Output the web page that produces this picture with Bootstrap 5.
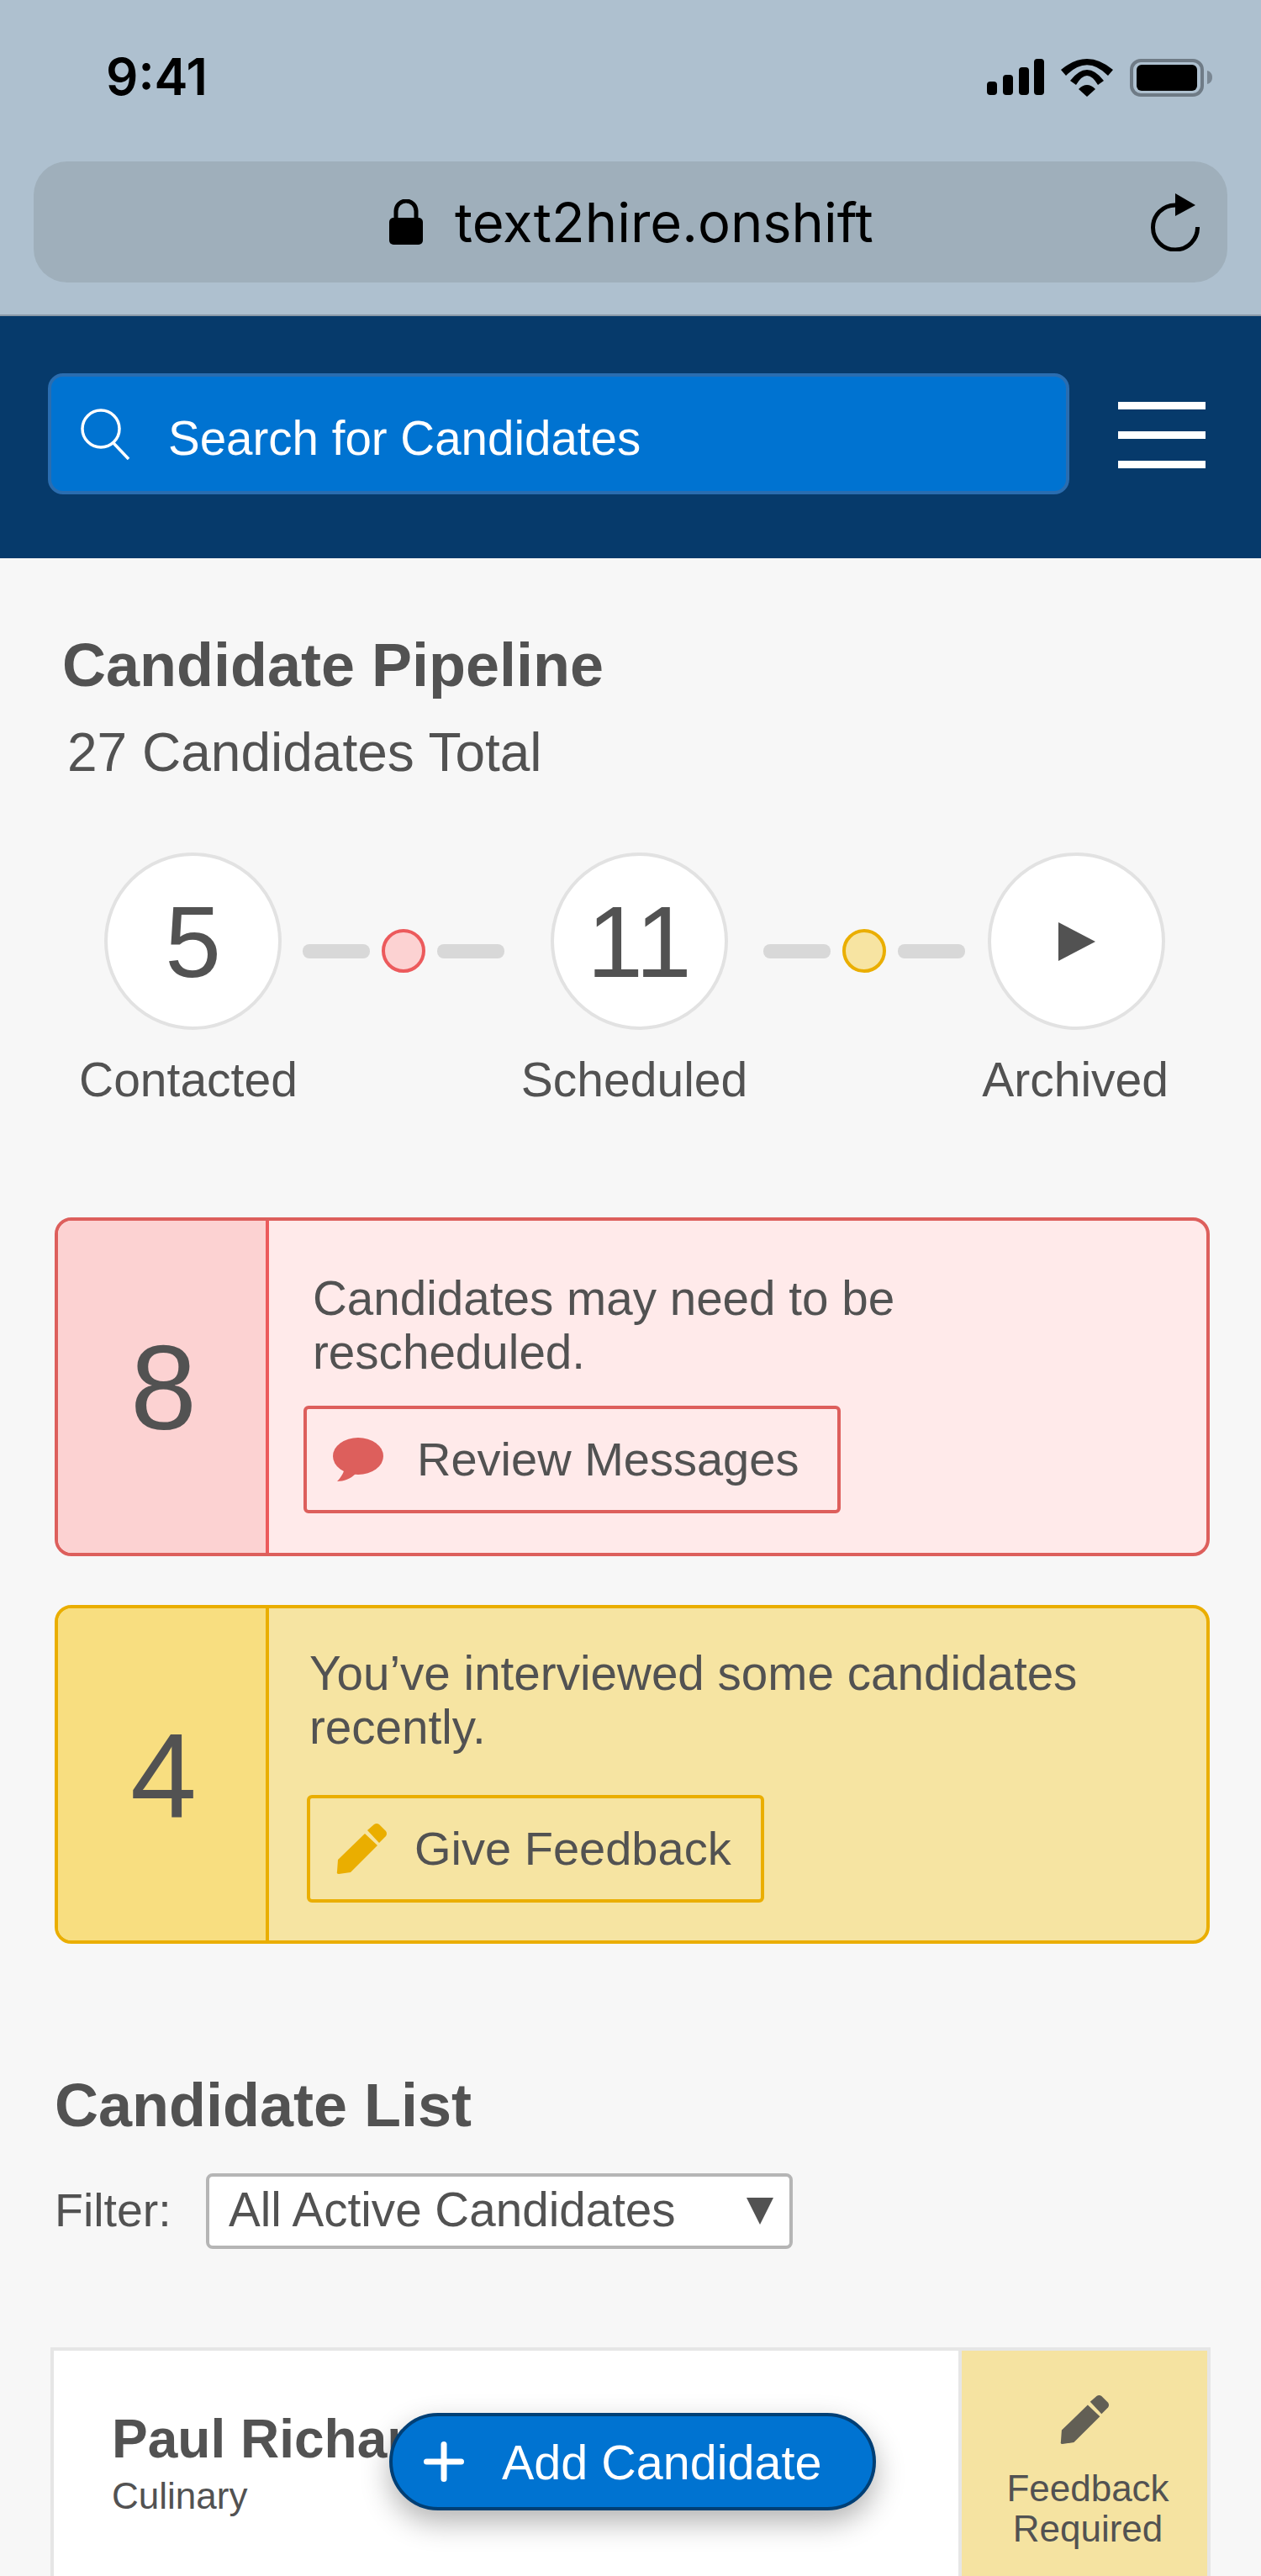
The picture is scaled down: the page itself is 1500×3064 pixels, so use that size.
<!DOCTYPE html>
<html lang="en">
<head>
<meta charset="UTF-8">
<meta name="viewport" content="width=device-width, initial-scale=1.0">
<title>Text2Hire - Candidates</title>
<link href="https://cdn.jsdelivr.net/npm/bootstrap@5.3.0/dist/css/bootstrap.min.css" rel="stylesheet">
<style>
    html, body { height: 3064px; overflow: hidden; }
    body { background: #f7f7f7; color: #525252; font-family: "Liberation Sans", Arial, sans-serif; }

    /* phone chrome */
    .phone-top { height: 376px; background: #aec0cf; border-bottom: 2px solid #8b9aa8; padding: 70px 40px 0; }
    .clock { font-family: Inter, sans-serif; font-weight: 600; font-size: 60px; line-height: 42px; color: #000; margin-left: 86px; }
    .status-icons { gap: 20px; margin-right: 18px; }
    .url-bar { height: 144px; margin-top: 77px; background: #9fafbb; border-radius: 40px; padding: 0 33px 0 423px; color: #000; }
    .url-text { font-family: Inter, sans-serif; font-size: 65px; line-height: 1; margin-left: 38px; }

    /* search header */
    .top-header { height: 288px; background: #063a6b; padding: 68px 66px 0 57px; }
    .search-box { width: 1215px; height: 144px; background: #0073d1; border: 4px solid #2a6db0; border-radius: 18px; padding-left: 35px; gap: 45px; color: #fff; font-size: 56.500px; }
    .search-box span { padding-top: 13px; }
    .burger { width: 104px; padding-top: 34px; }
    .burger i { display: block; height: 9px; background: #fff; margin-bottom: 26px; }

    /* pipeline */
    .sec-title { font-size: 72px; font-weight: 700; line-height: 1; color: #525252; margin: 0; }
    .pipeline { padding: 91px 0 0 74px; }
    .pipe-sub { font-size: 64px; line-height: 1; margin: 36px 0 0 6px; }
    .stepper { margin: 87px 0 0 50px; }
    .step-circle { width: 211px; height: 211px; flex: none; border: 4px solid #e2e2e2; border-radius: 50%; background: #fff; font-size: 120px; }
    .pipe-link { width: 240px; flex: none; margin: 91px 55px 0 25px; gap: 14px; }
    .pipe-link.link-b { margin: 91px 27px 0 42px; }
    .pipe-dash { width: 80px; height: 17px; border-radius: 8px; background: #d8d8d8; }
    .pipe-dot { width: 52px; height: 52px; flex: none; border-radius: 50%; border: 4px solid; }
    .dot-red { background: #fcd2d2; border-color: #ec5a5c; }
    .dot-yellow { background: #f7e4a2; border-color: #eaae00; }
    .step-labels { margin: 28px 0 0 20px; font-size: 57px; line-height: 1.1; }
    .scheduled-lbl { margin-left: 266px; }
    .archived-lbl { margin-left: 279px; }

    /* alert panels */
    .alert-panel { margin: 0 61px 0 65px; height: 403px; border: 4px solid; border-radius: 20px; overflow: hidden; }
    .panel-red { margin-top: 132px; background: #ffeaea; border-color: #dd5f5c; }
    .panel-yellow { margin-top: 58px; background: #f6e4a2; border-color: #eaae00; }
    .panel-num { width: 251px; flex: none; font-size: 142px; padding: 2px 0 0 4px; border-right: 4px solid; }
    .panel-red .panel-num { background: #fcd2d2; border-color: #ec5a5c; }
    .panel-yellow .panel-num { background: #f8de80; border-color: #eaae00; }
    .panel-body { padding: 61px 0 0 52px; }
    .panel-yellow .panel-body { padding: 46px 0 0 48px; }
    .panel-text { font-size: 56.600px; line-height: 64px; margin: 0; }
    .panel-btn { height: 128px; font-size: 56px; line-height: 1; color: #525252; background: transparent; border: 4px solid; border-radius: 6px; padding: 0 46px 0 31px; gap: 40px; margin: 31px 0 0 -11px; }
    .panel-red .panel-btn { border-color: #dd5f5c; }
    .panel-yellow .panel-btn { border-color: #eaae00; margin: 48px 0 0 -3px; padding: 0 35px 0 31px; gap: 33px; }
    .panel-btn:hover { color: #525252; }

    /* candidate list */
    .list-head { padding: 156px 0 0 65px; }
    .filter-row { margin-top: 45px; font-size: 56.600px; }
    .filter-lbl { width: 180px; font-size: 55.500px; }
    .filter-select { width: 698px; height: 90px; background: #fff; border: 4px solid #b5b5b5; border-radius: 8px; padding: 0 19px 0 23px; }
    .filter-arrow { width: 32px; height: 32px; }
    .cand-card { margin: 117px 60px 0 60px; height: 400px; border: 4px solid #e6e6e6; background: #fff; }
    .cand-info { padding: 73px 0 0 69px; }
    .cand-name { font-size: 64px; font-weight: 700; line-height: 1; margin: 0; }
    .cand-dept { font-size: 44px; line-height: 1; margin-top: 14px; }
    .cand-state { width: 296px; flex: none; background: #f5e3a1; border-left: 4px solid #e6e6e6; padding-top: 52px; text-align: center; font-size: 44px; line-height: 48px; }
    .cand-state svg { display: block; margin: 0 auto 28px; }
    .cand-state-txt { padding-left: 8px; }

    /* floating button */
    .fab-add { position: fixed; left: 463px; top: 2870px; width: 579px; height: 116px; background: #0073d1; border: 4px solid #003f75; border-radius: 58px; color: #fff; font-size: 57.500px; line-height: 1; padding: 0 0 0 37px; gap: 45px; box-shadow: 0 14px 34px rgba(0,0,0,.3); }
    .fab-add span { padding-top: 3px; }
    .fab-add:hover { background: #0073d1; color: #fff; border-color: #003f75; }
</style>
</head>
<body>
    <!-- phone status + url -->
    <div class="phone-top">
        <div class="d-flex justify-content-between align-items-start">
            <span class="clock">9:41</span>
            <div class="d-flex status-icons">
                <svg width="68" height="45" viewBox="0 0 68 45"><rect x="0" y="27" width="12" height="16" rx="4"/><rect x="19" y="19" width="12" height="24" rx="4"/><rect x="38" y="10" width="12" height="33" rx="4"/><rect x="56" y="0" width="12" height="43" rx="4"/></svg>
                <svg width="62" height="45" viewBox="0 0 62 45"><path d="M0 13Q31-13 62 13L56 20Q31-5.4 6 20Z"/><path d="M11 26Q31 0 51 26L44 31Q31 9 18 31Z"/><path d="M21 36Q31 26 41 36L31 45Z"/></svg>
                <svg width="98" height="45" viewBox="0 0 98 45"><rect x="2" y="2" width="84" height="41" rx="11" fill="none" stroke="#6f7b86" stroke-width="4"/><rect x="8" y="7" width="72" height="31" rx="6"/><path d="M92 14c4 1 6 4 6 8s-2 7-6 8z" fill="#7a8793"/></svg>
            </div>
        </div>
        <div class="url-bar d-flex align-items-center">
            <svg width="40" height="54" viewBox="0 0 40 54"><path d="M8 24V14a12 12 0 0 1 24 0V24" fill="none" stroke="#000" stroke-width="5"/><rect x="0" y="22" width="40" height="32" rx="5"/></svg>
            <span class="url-text">text2hire.onshift</span>
            <svg class="ms-auto" width="58" height="69" viewBox="0 0 58 69"><path d="M29 14A26.500 26.500 0 1 0 55.500 40" fill="none" stroke="#000" stroke-width="5"/><path d="M29 0L53 14L29 27Z"/></svg>
        </div>
    </div>

    <!-- search header -->
    <div class="top-header d-flex justify-content-between">
        <div class="search-box d-flex align-items-center">
            <svg width="59" height="61" viewBox="0 0 59 61" fill="none" stroke="#fff" stroke-width="3.500"><circle cx="24" cy="24" r="22"/><path d="M39 41L57 60"/></svg>
            <span>Search for Candidates</span>
        </div>
        <div class="burger"><i></i><i></i><i></i></div>
    </div>

    <!-- pipeline -->
    <section class="pipeline">
        <h2 class="sec-title">Candidate Pipeline</h2>
        <p class="pipe-sub">27 Candidates Total</p>
        <div class="stepper d-flex align-items-start">
            <div class="step-circle d-flex align-items-center justify-content-center">5</div>
            <div class="pipe-link d-flex align-items-center">
                <span class="pipe-dash"></span><span class="pipe-dot dot-red"></span><span class="pipe-dash"></span>
            </div>
            <div class="step-circle d-flex align-items-center justify-content-center">11</div>
            <div class="pipe-link link-b d-flex align-items-center">
                <span class="pipe-dash"></span><span class="pipe-dot dot-yellow"></span><span class="pipe-dash"></span>
            </div>
            <div class="step-circle d-flex align-items-center justify-content-center">
                <svg width="44" height="46" viewBox="0 0 44 46"><path d="M0 0L44 23L0 46Z" fill="#525252"/></svg>
            </div>
        </div>
        <div class="step-labels d-flex">
            <span>Contacted</span>
            <span class="scheduled-lbl">Scheduled</span>
            <span class="archived-lbl">Archived</span>
        </div>
    </section>

    <!-- alerts -->
    <div class="alert-panel panel-red d-flex">
        <div class="panel-num d-flex align-items-center justify-content-center">8</div>
        <div class="panel-body">
            <p class="panel-text">Candidates may need to be<br>rescheduled.</p>
            <a href="#" class="btn panel-btn d-inline-flex align-items-center">
                <svg width="60" height="52" viewBox="0 0 60 52" fill="#dd5f5c"><ellipse cx="30" cy="22" rx="30" ry="22"/><path d="M14 36C13 42 9 48 5 52C13 52 21 49 27 43Z"/></svg>
                <span>Review Messages</span>
            </a>
        </div>
    </div>
    <div class="alert-panel panel-yellow d-flex">
        <div class="panel-num d-flex align-items-center justify-content-center">4</div>
        <div class="panel-body">
            <p class="panel-text">You’ve interviewed some candidates<br>recently.</p>
            <a href="#" class="btn panel-btn d-inline-flex align-items-center">
                <svg width="60" height="62" viewBox="0 0 60 62" fill="#eaae00"><path d="M34 13L49 27L17 59L3 61Q0 61 1 58L2 44Z"/><path d="M37 9L45 2Q48 0 51 2L59 10Q61 13 59 16L51 24Z"/></svg>
                <span>Give Feedback</span>
            </a>
        </div>
    </div>

    <!-- list -->
    <section class="list-head">
        <h2 class="sec-title">Candidate List</h2>
        <div class="filter-row d-flex align-items-center">
            <span class="filter-lbl">Filter:</span>
            <div class="filter-select d-flex align-items-center justify-content-between">
                <span>All Active Candidates</span>
                <svg class="filter-arrow" viewBox="0 0 32 32"><path d="M0 0H32L16 32Z" fill="#525252"/></svg>
            </div>
        </div>
    </section>
    <div class="cand-card d-flex">
        <div class="cand-info flex-grow-1">
            <h3 class="cand-name">Paul Richards</h3>
            <div class="cand-dept">Culinary</div>
        </div>
        <div class="cand-state">
            <svg width="60" height="60" viewBox="0 0 60 62" fill="#625f55"><path d="M34 13L49 27L17 59L3 61Q0 61 1 58L2 44Z"/><path d="M37 9L45 2Q48 0 51 2L59 10Q61 13 59 16L51 24Z"/></svg>
            <div class="cand-state-txt">Feedback<br>Required</div>
        </div>
    </div>

    <button type="button" class="btn fab-add d-flex align-items-center">
        <svg width="48" height="48" viewBox="0 0 48 48" fill="#fff"><rect x="20.500" y="0" width="7" height="48" rx="3.500"/><rect x="0" y="20.500" width="48" height="7" rx="3.500"/></svg>
        <span>Add Candidate</span>
    </button>
    <script src="https://cdn.jsdelivr.net/npm/bootstrap@5.3.0/dist/js/bootstrap.bundle.min.js"></script>
</body>
</html>
